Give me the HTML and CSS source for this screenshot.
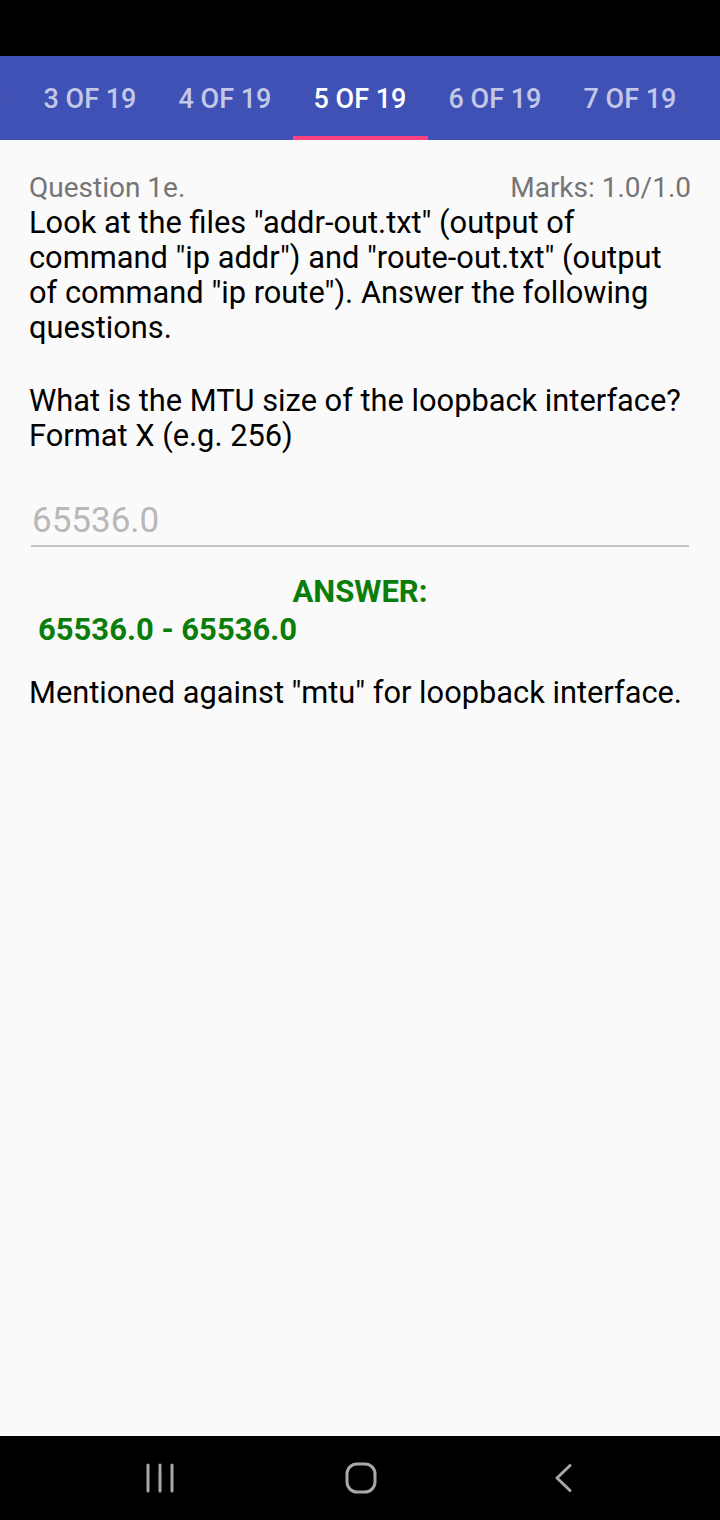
FILE: index.html
```html
<!DOCTYPE html>
<html>
<head>
<meta charset="utf-8">
<link rel="stylesheet" href="styles.css">
</head>
<body>
<div class="phone">
  <div class="status-bar"></div>
  <div class="tab-bar">
    <div class="tab-strip">
      <div class="tab">2 OF 19</div>
      <div class="tab">3 OF 19</div>
      <div class="tab">4 OF 19</div>
      <div class="tab active">5 OF 19</div>
      <div class="tab">6 OF 19</div>
      <div class="tab">7 OF 19</div>
    </div>
  </div>
  <main class="content">
    <div class="q-header">
      <span class="q-title">Question 1e.</span>
      <span class="q-marks">Marks: 1.0/1.0</span>
    </div>
    <p class="q-text">Look at the files "addr-out.txt" (output of command "ip addr") and "route-out.txt" (output of command "ip route"). Answer the following questions.</p>
    <p class="q-text q-second">What is the MTU size of the loopback interface?<br>Format X (e.g. 256)</p>
    <div class="answer-field">65536.0</div>
    <div class="answer-label">ANSWER:</div>
    <div class="answer-range">65536.0 - 65536.0</div>
    <p class="explanation">Mentioned against "mtu" for loopback interface.</p>
  </main>
  <nav class="nav-bar">
    <svg class="nav-recent" width="30" height="30" viewBox="0 0 30 30">
      <g stroke="#a8a8a8" stroke-width="3" stroke-linecap="round">
        <line x1="3" y1="2" x2="3" y2="28"/>
        <line x1="15" y1="2" x2="15" y2="28"/>
        <line x1="27" y1="2" x2="27" y2="28"/>
      </g>
    </svg>
    <svg class="nav-home" width="32" height="32" viewBox="0 0 32 32">
      <rect x="2" y="2" width="28" height="28" rx="10" ry="10" fill="none" stroke="#a8a8a8" stroke-width="3"/>
    </svg>
    <svg class="nav-back" width="20" height="30" viewBox="0 0 20 30">
      <polyline points="17,2.5 4,15 17,27.5" fill="none" stroke="#a8a8a8" stroke-width="3" stroke-linecap="round" stroke-linejoin="round"/>
    </svg>
  </nav>
</div>
</body>
</html>
```
FILE: styles.css
```css
html, body {
  margin: 0;
  padding: 0;
}
body {
  font-family: Roboto, "Noto Sans", sans-serif;
  background: #fafafa;
}
.phone {
  width: 720px;
  height: 1520px;
  display: flex;
  flex-direction: column;
  overflow: hidden;
  background: #fafafa;
}
.status-bar {
  height: 56px;
  background: #000;
  flex: none;
}
.tab-bar {
  height: 84px;
  background: #3f51b5;
  overflow: hidden;
  flex: none;
}
.tab-strip {
  display: flex;
  margin-left: -112.5px;
  height: 100%;
}
.tab {
  flex: none;
  width: 135px;
  box-sizing: border-box;
  display: flex;
  align-items: center;
  justify-content: center;
  font-weight: 500;
  font-size: 27px;
  color: rgba(255, 255, 255, 0.7);
  border-bottom: 4px solid transparent;
  padding-top: 6px;
  white-space: nowrap;
}
.tab.active {
  color: #fff;
  border-bottom-color: #ff4081;
}
.content {
  flex: 1;
  padding: 30px 29px 0 29px;
}
.q-header {
  display: flex;
  justify-content: space-between;
  align-items: baseline;
  color: #757575;
  font-size: 28px;
  line-height: 35px;
}
.q-text {
  margin: 0;
  font-size: 30.8px;
  line-height: 35px;
  color: #000;
}
.q-second {
  margin-top: 38px;
}
.answer-field {
  margin: 47px 2px 0 2px;
  font-size: 35px;
  line-height: 42px;
  color: #b8b8b8;
  padding: 0 0 3px 1px;
  border-bottom: 2px solid #c4c4c4;
}
.answer-label {
  margin-top: 26px;
  text-align: center;
  font-weight: 700;
  font-size: 31px;
  line-height: 38px;
  color: #0a7d0a;
}
.answer-range {
  margin-left: 9px;
  font-weight: 700;
  font-size: 31px;
  line-height: 38px;
  color: #0a7d0a;
}
.explanation {
  margin: 26px 0 0 0;
  font-size: 30.8px;
  line-height: 35px;
  color: #000;
}
.nav-bar {
  height: 84px;
  flex: none;
  background: #000;
  display: flex;
  align-items: center;
  padding-left: 145px;
}
.nav-home {
  margin-left: 170px;
}
.nav-back {
  margin-left: 176px;
}
```
